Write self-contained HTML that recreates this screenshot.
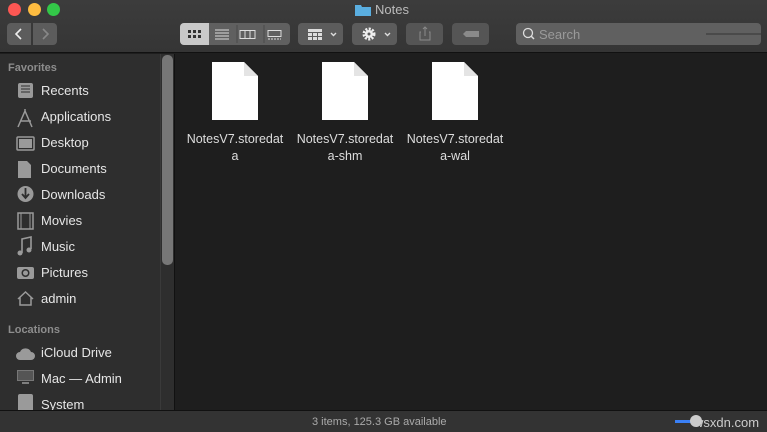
<!DOCTYPE html>
<html><head><style>
*{margin:0;padding:0;box-sizing:border-box}
body{width:767px;height:432px;overflow:hidden;background:#1e1e1e;font-family:"Liberation Sans",sans-serif;position:relative;color:#ddd}
.top{position:absolute;left:0;top:0;width:767px;height:53px;background:linear-gradient(#3c3c3c,#353535);border-bottom:1px solid #111}
.dot{position:absolute;top:3px;width:13px;height:13px;border-radius:50%}
.btn{position:absolute;top:23px;height:22px;background:#5c5c5c;border-radius:4px}
.side{position:absolute;left:0;top:54px;width:175px;height:356px;background:#2e2e2e;border-right:1px solid #111}
.hd{position:absolute;left:8px;font-size:11px;color:#8d8d8d;font-weight:bold}
.it{position:absolute;left:41px;font-size:13px;color:#e6e6e6}
.f{position:absolute;top:62px;width:46px;height:58px}
.fn{position:absolute;top:131px;width:110px;text-align:center;font-size:12.5px;line-height:17px;color:#ddd}
.status{position:absolute;left:0;top:410px;width:767px;height:22px;background:#333;border-top:1px solid #111;font-size:11px;color:#aaa}
</style></head><body>
<div class="top">
<div class="dot" style="left:8px;background:#fc5753"></div>
<div class="dot" style="left:28px;background:#fdbc40"></div>
<div class="dot" style="left:47px;background:#33c748"></div>
<svg style="position:absolute;left:355px;top:3px" width="16" height="13"><path d="M0 2h6l1 2h9v9H0z" fill="#5aaee0"/></svg>
<div style="position:absolute;left:375px;top:2px;font-size:13px;color:#bbb">Notes</div>
<div class="btn" style="left:7px;width:24px;border-radius:4px 0 0 4px"><svg width="24" height="22"><path d="M14 6l-5 5 5 5" stroke="#eee" stroke-width="1.6" fill="none"/></svg></div>
<div class="btn" style="left:33px;width:24px;border-radius:0 4px 4px 0"><svg width="24" height="22"><path d="M10 6l5 5-5 5" stroke="#888" stroke-width="1.6" fill="none"/></svg></div>
<div class="btn" style="left:180px;width:110px;background:#606060"></div>
<div class="btn" style="left:180px;width:29px;background:#c9c9c9;border-radius:4px 0 0 4px"><svg width="29" height="22"><g fill="#333"><rect x="8" y="7" width="3" height="3"/><rect x="13" y="7" width="3" height="3"/><rect x="18" y="7" width="3" height="3"/><rect x="8" y="12" width="3" height="3"/><rect x="13" y="12" width="3" height="3"/><rect x="18" y="12" width="3" height="3"/></g></svg></div>
<svg style="position:absolute;left:209px;top:23px" width="81" height="22"><g stroke="#ddd" fill="none"><path d="M6 7h14M6 10h14M6 13h14M6 16h14"/><rect x="31" y="7.5" width="15" height="8"/><path d="M36 7v9M41 7v9"/><rect x="59" y="7.5" width="13" height="6"/><path d="M59 16h13" stroke-dasharray="2 1"/></g><path d="M28 2v18M55 2v18" stroke="#4a4a4a"/></svg>
<div class="btn" style="left:298px;width:45px"><svg width="45" height="22"><g fill="#ddd"><rect x="10" y="6" width="14" height="3"/><rect x="10" y="10" width="4" height="3"/><rect x="15" y="10" width="4" height="3"/><rect x="20" y="10" width="4" height="3"/><rect x="10" y="14" width="4" height="3"/><rect x="15" y="14" width="4" height="3"/><rect x="20" y="14" width="4" height="3"/></g><path d="M33 10l2.5 2.5 2.5-2.5" stroke="#ddd" stroke-width="1.4" fill="none"/></svg></div>
<div class="btn" style="left:352px;width:45px"><svg width="45" height="22"><circle cx="17" cy="11" r="5" fill="none" stroke="#eee" stroke-width="3" stroke-dasharray="2 1.3"/><circle cx="17" cy="11" r="4" fill="#eee"/><circle cx="17" cy="11" r="1.5" fill="#5c5c5c"/><path d="M33 10l2.5 2.5 2.5-2.5" stroke="#ddd" stroke-width="1.4" fill="none"/></svg></div>
<div class="btn" style="left:406px;width:37px;background:#555"><svg width="37" height="22"><path d="M15 9h-1v8h10V9h-1M19 4v9M17 6l2-2 2 2" stroke="#8a8a8a" fill="none"/></svg></div>
<div class="btn" style="left:452px;width:37px;background:#555"><svg width="37" height="22"><path d="M14 8h13v6H14l-3-3z" fill="#8a8a8a"/></svg></div>
<div class="btn" style="left:516px;width:245px;background:#606060"><svg width="245" height="22"><circle cx="12" cy="10" r="4.5" stroke="#ddd" stroke-width="1.3" fill="none"/><path d="M15 13l3 3" stroke="#ddd" stroke-width="1.5"/><path d="M190 11h55" stroke="#333"/></svg><span style="position:absolute;left:23px;top:4px;font-size:13px;color:#9a9a9a">Search</span></div>
</div>
<div class="side">
<div style="position:absolute;left:162px;top:1px;width:11px;height:210px;background:#777;border-radius:5px"></div>
<div style="position:absolute;left:160px;top:0;width:1px;height:356px;background:#3a3a3a"></div>
</div>
<div class="hd" style="top:62px">Favorites</div>
<div class="it" style="top:83px">Recents</div>
<div class="it" style="top:109px">Applications</div>
<div class="it" style="top:135px">Desktop</div>
<div class="it" style="top:161px">Documents</div>
<div class="it" style="top:187px">Downloads</div>
<div class="it" style="top:213px">Movies</div>
<div class="it" style="top:239px">Music</div>
<div class="it" style="top:265px">Pictures</div>
<div class="it" style="top:291px">admin</div>
<div class="hd" style="top:324px">Locations</div>
<div class="it" style="top:345px">iCloud Drive</div>
<div class="it" style="top:371px">Mac — Admin</div>
<div class="it" style="top:397px">System</div>
<svg style="position:absolute;left:16px;top:81px" width="20" height="330" fill="#9a9a9a" stroke="#9a9a9a">
<rect x="2" y="2" width="15" height="15" rx="2" stroke="none"/><path d="M5 5h9M5 8h9M5 11h9" stroke="#2e2e2e"/>
<path d="M2 46l7-16 7 16M4 40h11M9 30v-2" fill="none" stroke-width="1.5"/>
<rect x="1" y="56" width="17" height="13" rx="1" fill="none" stroke-width="1.5"/><rect x="3" y="58" width="13" height="9" stroke="none"/>
<path d="M2 80h9l4 4v13H2z" stroke="none"/>
<circle cx="9.5" cy="113" r="8" stroke="none"/><path d="M9.5 107v9M6 113l3.5 4 3.5-4" stroke="#2e2e2e" stroke-width="1.8" fill="none"/>
<rect x="2" y="132" width="15" height="16" fill="none" stroke-width="1.5"/><path d="M5 132v16M14 132v16" stroke-width="1"/>
<path d="M6 172v-14l9-2v12" fill="none" stroke-width="1.6"/><circle cx="4" cy="172" r="2.5" stroke="none"/><circle cx="13" cy="169" r="2.5" stroke="none"/>
<rect x="1" y="186" width="17" height="12" rx="2" stroke="none"/><circle cx="9.5" cy="192" r="4" fill="#2e2e2e" stroke="none"/><circle cx="9.5" cy="192" r="2.5" stroke="none"/>
<path d="M2 218l7.5-7 7.5 7M4 216v8h11v-8" fill="none" stroke-width="1.5"/>
<path d="M4 279a4 4 0 010-8 6 6 0 0111 0 4 4 0 010 8z" stroke="none"/>
<rect x="1" y="289" width="17" height="11" stroke="none" fill="#777"/><rect x="2" y="290" width="15" height="9" stroke="none" fill="#555"/><path d="M6 302h7" stroke-width="1.5"/>
<rect x="2" y="313" width="15" height="18" rx="2" stroke="none"/>
</svg>
<svg style="position:absolute;left:0;top:0" width="767" height="130">
<defs><path id="d" d="M0 0h32l14 14v44H0z" fill="#fff"/></defs>
<use href="#d" x="212" y="62"/><use href="#d" x="322" y="62"/><use href="#d" x="432" y="62"/>
<path d="M244 62v14h14zM354 62v14h14zM464 62v14h14z" fill="#e4e4e4"/>
</svg>
<div class="fn" style="left:180px">NotesV7.storedat<br>a</div>
<div class="fn" style="left:290px">NotesV7.storedat<br>a-shm</div>
<div class="fn" style="left:400px">NotesV7.storedat<br>a-wal</div>
<div class="status"><span style="position:absolute;left:312px;top:5px">3 items, 125.3 GB available</span>
<div style="position:absolute;left:675px;top:9px;width:20px;height:3px;background:#3a80f6"></div>
<div style="position:absolute;left:690px;top:4px;width:12px;height:12px;border-radius:50%;background:#ccc"></div>
<span style="position:absolute;left:694px;top:4px;font-size:13px;color:#ccc">wsxdn.com</span></div>
</body></html>
